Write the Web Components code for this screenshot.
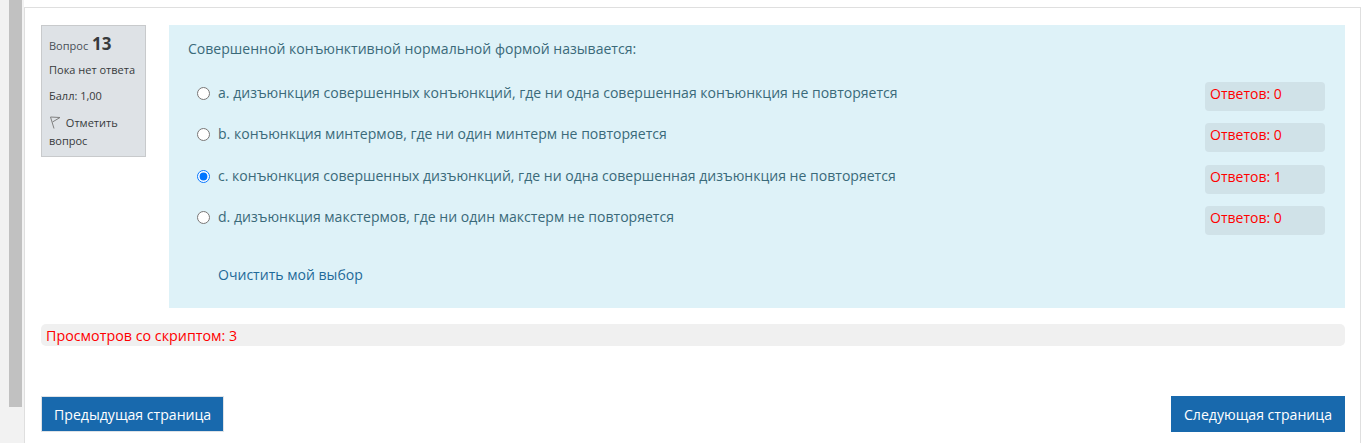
<!DOCTYPE html>
<html lang="ru">
<head>
<meta charset="utf-8">
<title>Вопрос 13</title>
<style>
  html, body { margin: 0; height: 443px; overflow: hidden; background: #fff; }
  body { font-family: "Open Sans", "Noto Sans", sans-serif; }
</style>
</head>
<body>
<quiz-page>
  <quiz-info number="13"></quiz-info>
  <quiz-question text="Совершенной конъюнктивной нормальной формой называется:">
    <quiz-answer count="0">a. дизъюнкция совершенных конъюнкций, где ни одна совершенная конъюнкция не повторяется</quiz-answer>
    <quiz-answer count="0">b. конъюнкция минтермов, где ни один минтерм не повторяется</quiz-answer>
    <quiz-answer count="1" checked>c. конъюнкция совершенных дизъюнкций, где ни одна совершенная дизъюнкция не повторяется</quiz-answer>
    <quiz-answer count="0">d. дизъюнкция макстермов, где ни один макстерм не повторяется</quiz-answer>
  </quiz-question>
</quiz-page>

<script>
class QuizPage extends HTMLElement {
  constructor() {
    super();
    const shadow = this.attachShadow({ mode: "open" });
    shadow.innerHTML = `
      <style>
        :host { display: flex; height: 443px; box-sizing: border-box; }
        .gutter { width: 24px; flex: none; display: flex; background: #f2f2f2; padding-left: 9px; box-sizing: border-box; }
        .gutter div { width: 13px; height: 407px; background: #c1c1c1; }
        .card { width: 1337px; flex: none; margin-top: 7px; border: 1px solid #dfdfdf; border-bottom: 0; box-sizing: border-box;
                padding: 17px 15px 0 16px; background: #fff; }
        .question { display: flex; gap: 23px; align-items: flex-start; }
        .views { margin-top: 16px; height: 22px; line-height: 23px; background: #f0f0f0; border-radius: 5px;
                 padding-left: 5px; color: #f00; font-size: 14.3px; }
        .nav { display: flex; justify-content: space-between; margin-top: 50px; }
      </style>
      <div class="gutter"><div></div></div>
      <div class="card">
        <div class="question"><slot></slot></div>
        <div class="views">Просмотров со скриптом: 3</div>
        <div class="nav">
          <quiz-button bordered>Предыдущая страница</quiz-button>
          <quiz-button>Следующая страница</quiz-button>
        </div>
      </div>
    `;
  }
}

class QuizInfo extends HTMLElement {
  constructor() {
    super();
    const shadow = this.attachShadow({ mode: "open" });
    const number = this.getAttribute("number");
    shadow.innerHTML = `
      <style>
        :host { display: block; width: 105px; height: 132px; flex: none; box-sizing: border-box; background: #dee2e6;
                border: 1px solid #c8cacc; padding: 5px 7px; color: #373a3c; font-size: 11px; }
        .no { height: 25px; line-height: 25px; color: #495057; }
        .no b { font-size: 17px; font-weight: 700; color: #373a3c; margin-left: 1px; }
        p { margin: 0; line-height: 18px; }
        .state { margin-top: 5px; }
        .mark { margin-top: 8px; }
        .flag { margin-top: 9px; }
        svg { width: 12px; height: 13px; vertical-align: -2px; margin-right: 2px; }
      </style>
      <div class="no">Вопрос <b>${number}</b></div>
      <p class="state">Пока нет ответа</p>
      <p class="mark">Балл: 1,00</p>
      <p class="flag"><svg viewBox="0 0 12 13" fill="none" stroke="#808080" stroke-width="1">
        <path d="M1.500 1 L5 12.500 M1.500 1 L11 1.500 L3.500 6"/></svg> Отметить вопрос</p>
    `;
  }
}

class QuizQuestion extends HTMLElement {
  constructor() {
    super();
    const shadow = this.attachShadow({ mode: "open" });
    shadow.innerHTML = `
      <style>
        :host { display: block; flex: 1; height: 283px; box-sizing: border-box; background: #def2f8; color: #3a6a7a;
                padding: 13px 20px 0 19px; font-size: 14.05px; }
        .text { line-height: 21px; margin-bottom: 22.750px; }
        .clear { display: block; margin: 16.250px 0 0 30px; line-height: 21px; color: #1f6a99; }
      </style>
      <div class="text">${this.getAttribute("text")}</div>
      <slot></slot>
      <span class="clear">Очистить мой выбор</span>
    `;
  }
}

class QuizAnswer extends HTMLElement {
  constructor() {
    super();
    const shadow = this.attachShadow({ mode: "open" });
    const checked = this.hasAttribute("checked") ? "checked" : "";
    shadow.innerHTML = `
      <style>
        :host { display: flex; height: 41.500px; align-items: flex-start; }
        input { width: 13px; height: 13px; margin: 5px 8px 0 9px; flex: none; }
        .label { flex: 1; line-height: 22px; }
        .count { width: 120px; height: 29px; box-sizing: border-box; flex: none; background: #d0e2e8; border-radius: 4px;
                 color: #f00; padding-left: 5px; line-height: 23px; font-size: 14px; }
      </style>
      <input type="radio" name="q" ${checked}>
      <span class="label"><slot></slot></span>
      <span class="count">Ответов: ${this.getAttribute("count")}</span>
    `;
  }
}

class QuizButton extends HTMLElement {
  constructor() {
    super();
    const shadow = this.attachShadow({ mode: "open" });
    const border = this.hasAttribute("bordered") ? "#dee2e6" : "#1869ad";
    shadow.innerHTML = `
      <style>
        :host { display: block; }
        button { height: 36px; padding: 0 12px; border: 1px solid ${border}; background: #1869ad; color: #fff;
                 font: 14.1px "Open Sans", "Noto Sans", sans-serif; }
      </style>
      <button><slot></slot></button>
    `;
  }
}

customElements.define("quiz-page", QuizPage);
customElements.define("quiz-info", QuizInfo);
customElements.define("quiz-question", QuizQuestion);
customElements.define("quiz-answer", QuizAnswer);
customElements.define("quiz-button", QuizButton);
</script>
</body>
</html>
